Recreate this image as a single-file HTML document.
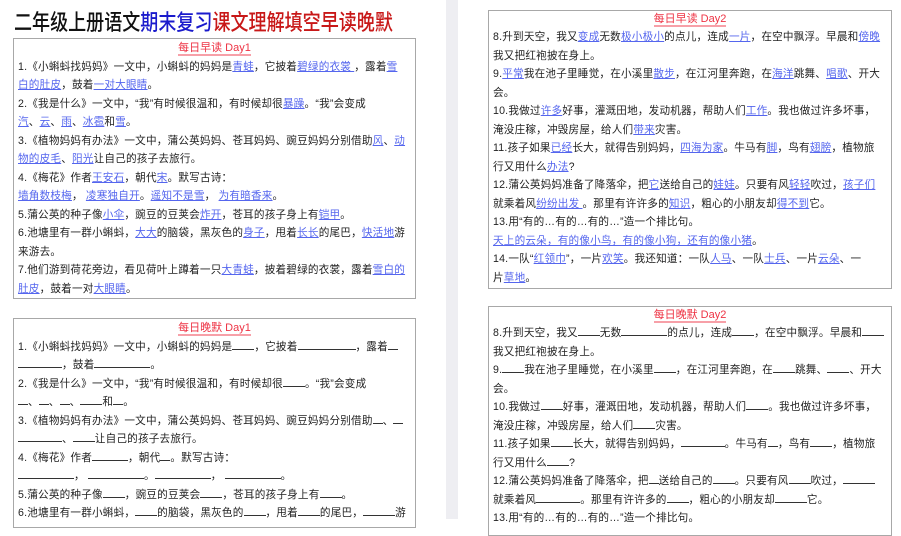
<!DOCTYPE html>
<html><head><meta charset="utf-8"><style>
*{margin:0;padding:0;box-sizing:border-box}
body{width:901px;height:519px;overflow:hidden;background:#fff;position:relative;font-family:"Liberation Sans","Noto Sans CJK SC",sans-serif;color:#222}
.gap{position:absolute;left:446px;top:0;width:12px;height:519px;background:#eeeef2}
.h1{position:absolute;left:14px;top:6px;font-size:22px;font-family:"Noto Sans CJK SC",sans-serif;font-weight:500;white-space:nowrap;line-height:30px;color:#111;transform:scaleX(0.82);transform-origin:0 0}
.box{position:absolute;border:1px solid #a8a8a8;background:#fff;overflow:hidden}
.l{height:18.5px;line-height:18.5px;font-size:10.6px;white-space:nowrap;padding-left:4px;letter-spacing:0.2px}
.t{text-align:center;color:#ee3344;font-size:11px;height:17px;line-height:17px}
.t span{border-bottom:2px solid #f7a0a8}
.b{color:#5566ee;text-decoration:underline}
.u{display:inline-block;border-bottom:1px solid #333;height:11px;vertical-align:baseline}
</style></head><body>
<div class="h1">二年级上册语文<span style="color:#1a1acc">期末复习</span><span style="color:#c81818">课文理解填空早读晚默</span></div>
<div class="gap"></div>

<div class="box" style="left:13px;top:38px;width:403px;height:261px">
<div class="t" style="height:18.5px;line-height:18.5px"><span>每日早读 Day1</span></div>
<div class="l">1.《小蝌蚪找妈妈》一文中，小蝌蚪的妈妈是<span class="b">青蛙</span>，它披着<span class="b">碧绿的衣裳 </span>，露着<span class="b">雪</span></div>
<div class="l"><span class="b">白的肚皮</span>，鼓着<span class="b">一对大眼睛</span>。</div>
<div class="l">2.《我是什么》一文中，“我”有时候很温和，有时候却很<span class="b">暴躁</span>。“我”会变成</div>
<div class="l"><span class="b">汽</span>、<span class="b">云</span>、<span class="b">雨</span>、<span class="b">冰雹</span>和<span class="b">雪</span>。</div>
<div class="l">3.《植物妈妈有办法》一文中，蒲公英妈妈、苍耳妈妈、豌豆妈妈分别借助<span class="b">风</span>、<span class="b">动</span></div>
<div class="l"><span class="b">物的皮毛</span>、<span class="b">阳光</span>让自己的孩子去旅行。</div>
<div class="l">4.《梅花》作者<span class="b">王安石</span>，朝代<span class="b">宋</span>。默写古诗：</div>
<div class="l"><span class="b">墙角数枝梅</span>， <span class="b">凌寒独自开</span>。<span class="b">遥知不是雪</span>， <span class="b">为有暗香来</span>。</div>
<div class="l">5.蒲公英的种子像<span class="b">小伞</span>，豌豆的豆荚会<span class="b">炸开</span>，苍耳的孩子身上有<span class="b">铠甲</span>。</div>
<div class="l">6.池塘里有一群小蝌蚪，<span class="b">大大</span>的脑袋，黑灰色的<span class="b">身子</span>，甩着<span class="b">长长</span>的尾巴，<span class="b">快活地</span>游</div>
<div class="l">来游去。</div>
<div class="l">7.他们游到荷花旁边，看见荷叶上蹲着一只<span class="b">大青蛙</span>，披着碧绿的衣裳，露着<span class="b">雪白的</span></div>
<div class="l"><span class="b">肚皮</span>，鼓着一对<span class="b">大眼睛</span>。</div>
</div>

<div class="box" style="left:13px;top:318px;width:403px;height:210px">
<div class="t" style="height:18.5px;line-height:18.5px"><span>每日晚默 Day1</span></div>
<div class="l">1.《小蝌蚪找妈妈》一文中，小蝌蚪的妈妈是<span class="u" style="width:22px"></span>，它披着<span class="u" style="width:58px"></span>，露着<span class="u" style="width:10px"></span></div>
<div class="l"><span class="u" style="width:44px"></span>，鼓着<span class="u" style="width:56px"></span>。</div>
<div class="l">2.《我是什么》一文中，“我”有时候很温和，有时候却很<span class="u" style="width:22px"></span>。“我”会变成</div>
<div class="l"><span class="u" style="width:10px"></span>、<span class="u" style="width:10px"></span>、<span class="u" style="width:10px"></span>、<span class="u" style="width:22px"></span>和<span class="u" style="width:10px"></span>。</div>
<div class="l">3.《植物妈妈有办法》一文中，蒲公英妈妈、苍耳妈妈、豌豆妈妈分别借助<span class="u" style="width:10px"></span>、<span class="u" style="width:10px"></span></div>
<div class="l"><span class="u" style="width:44px"></span>、<span class="u" style="width:22px"></span>让自己的孩子去旅行。</div>
<div class="l">4.《梅花》作者<span class="u" style="width:36px"></span>，朝代<span class="u" style="width:10px"></span>。默写古诗：</div>
<div class="l"><span class="u" style="width:56px"></span>， <span class="u" style="width:56px"></span>。<span class="u" style="width:56px"></span>， <span class="u" style="width:56px"></span>。</div>
<div class="l">5.蒲公英的种子像<span class="u" style="width:22px"></span>，豌豆的豆荚会<span class="u" style="width:22px"></span>，苍耳的孩子身上有<span class="u" style="width:22px"></span>。</div>
<div class="l">6.池塘里有一群小蝌蚪，<span class="u" style="width:22px"></span>的脑袋，黑灰色的<span class="u" style="width:22px"></span>，甩着<span class="u" style="width:22px"></span>的尾巴，<span class="u" style="width:32px"></span>游</div>
</div>

<div class="box" style="left:488px;top:10px;width:404px;height:279px">
<div class="t"><span>每日早读 Day2</span></div>
<div class="l">8.升到天空，我又<span class="b">变成</span>无数<span class="b">极小极小</span>的点儿，连成<span class="b">一片</span>，在空中飘浮。早晨和<span class="b">傍晚</span></div>
<div class="l">我又把红袍披在身上。</div>
<div class="l">9.<span class="b">平常</span>我在池子里睡觉，在小溪里<span class="b">散步</span>，在江河里奔跑，在<span class="b">海洋</span>跳舞、<span class="b">唱歌</span>、开大</div>
<div class="l">会。</div>
<div class="l">10.我做过<span class="b">许多</span>好事，灌溉田地，发动机器，帮助人们<span class="b">工作</span>。我也做过许多坏事，</div>
<div class="l">淹没庄稼，冲毁房屋，给人们<span class="b">带来</span>灾害。</div>
<div class="l">11.孩子如果<span class="b">已经</span>长大，就得告别妈妈，<span class="b">四海为家</span>。牛马有<span class="b">脚</span>，鸟有<span class="b">翅膀</span>，植物旅</div>
<div class="l">行又用什么<span class="b">办法</span>?</div>
<div class="l">12.蒲公英妈妈准备了降落伞，把<span class="b">它</span>送给自己的<span class="b">娃娃</span>。只要有风<span class="b">轻轻</span>吹过，<span class="b">孩子们</span></div>
<div class="l">就乘着风<span class="b">纷纷出发 </span>。那里有许许多的<span class="b">知识</span>，粗心的小朋友却<span class="b">得不到</span>它。</div>
<div class="l">13.用“有的…有的…有的…”造一个排比句。</div>
<div class="l"><span class="b">天上的云朵，有的像小鸟，有的像小狗，还有的像小猪</span>。</div>
<div class="l">14.一队“<span class="b">红领巾</span>”，一片<span class="b">欢笑</span>。我还知道：一队<span class="b">人马</span>、一队<span class="b">士兵</span>、一片<span class="b">云朵</span>、一</div>
<div class="l">片<span class="b">草地</span>。</div>
</div>

<div class="box" style="left:488px;top:306px;width:404px;height:230px">
<div class="t"><span>每日晚默 Day2</span></div>
<div class="l">8.升到天空，我又<span class="u" style="width:22px"></span>无数<span class="u" style="width:46px"></span>的点儿，连成<span class="u" style="width:22px"></span>，在空中飘浮。早晨和<span class="u" style="width:22px"></span></div>
<div class="l">我又把红袍披在身上。</div>
<div class="l">9.<span class="u" style="width:22px"></span>我在池子里睡觉，在小溪里<span class="u" style="width:22px"></span>，在江河里奔跑，在<span class="u" style="width:22px"></span>跳舞、<span class="u" style="width:22px"></span>、开大</div>
<div class="l">会。</div>
<div class="l">10.我做过<span class="u" style="width:22px"></span>好事，灌溉田地，发动机器，帮助人们<span class="u" style="width:22px"></span>。我也做过许多坏事，</div>
<div class="l">淹没庄稼，冲毁房屋，给人们<span class="u" style="width:22px"></span>灾害。</div>
<div class="l">11.孩子如果<span class="u" style="width:22px"></span>长大，就得告别妈妈，<span class="u" style="width:44px"></span>。牛马有<span class="u" style="width:10px"></span>，鸟有<span class="u" style="width:22px"></span>，植物旅</div>
<div class="l">行又用什么<span class="u" style="width:22px"></span>?</div>
<div class="l">12.蒲公英妈妈准备了降落伞，把<span class="u" style="width:10px"></span>送给自己的<span class="u" style="width:22px"></span>。只要有风<span class="u" style="width:22px"></span>吹过，<span class="u" style="width:32px"></span></div>
<div class="l">就乘着风<span class="u" style="width:44px"></span>。那里有许许多的<span class="u" style="width:22px"></span>，粗心的小朋友却<span class="u" style="width:32px"></span>它。</div>
<div class="l">13.用“有的…有的…有的…”造一个排比句。</div>
</div>
</body></html>
